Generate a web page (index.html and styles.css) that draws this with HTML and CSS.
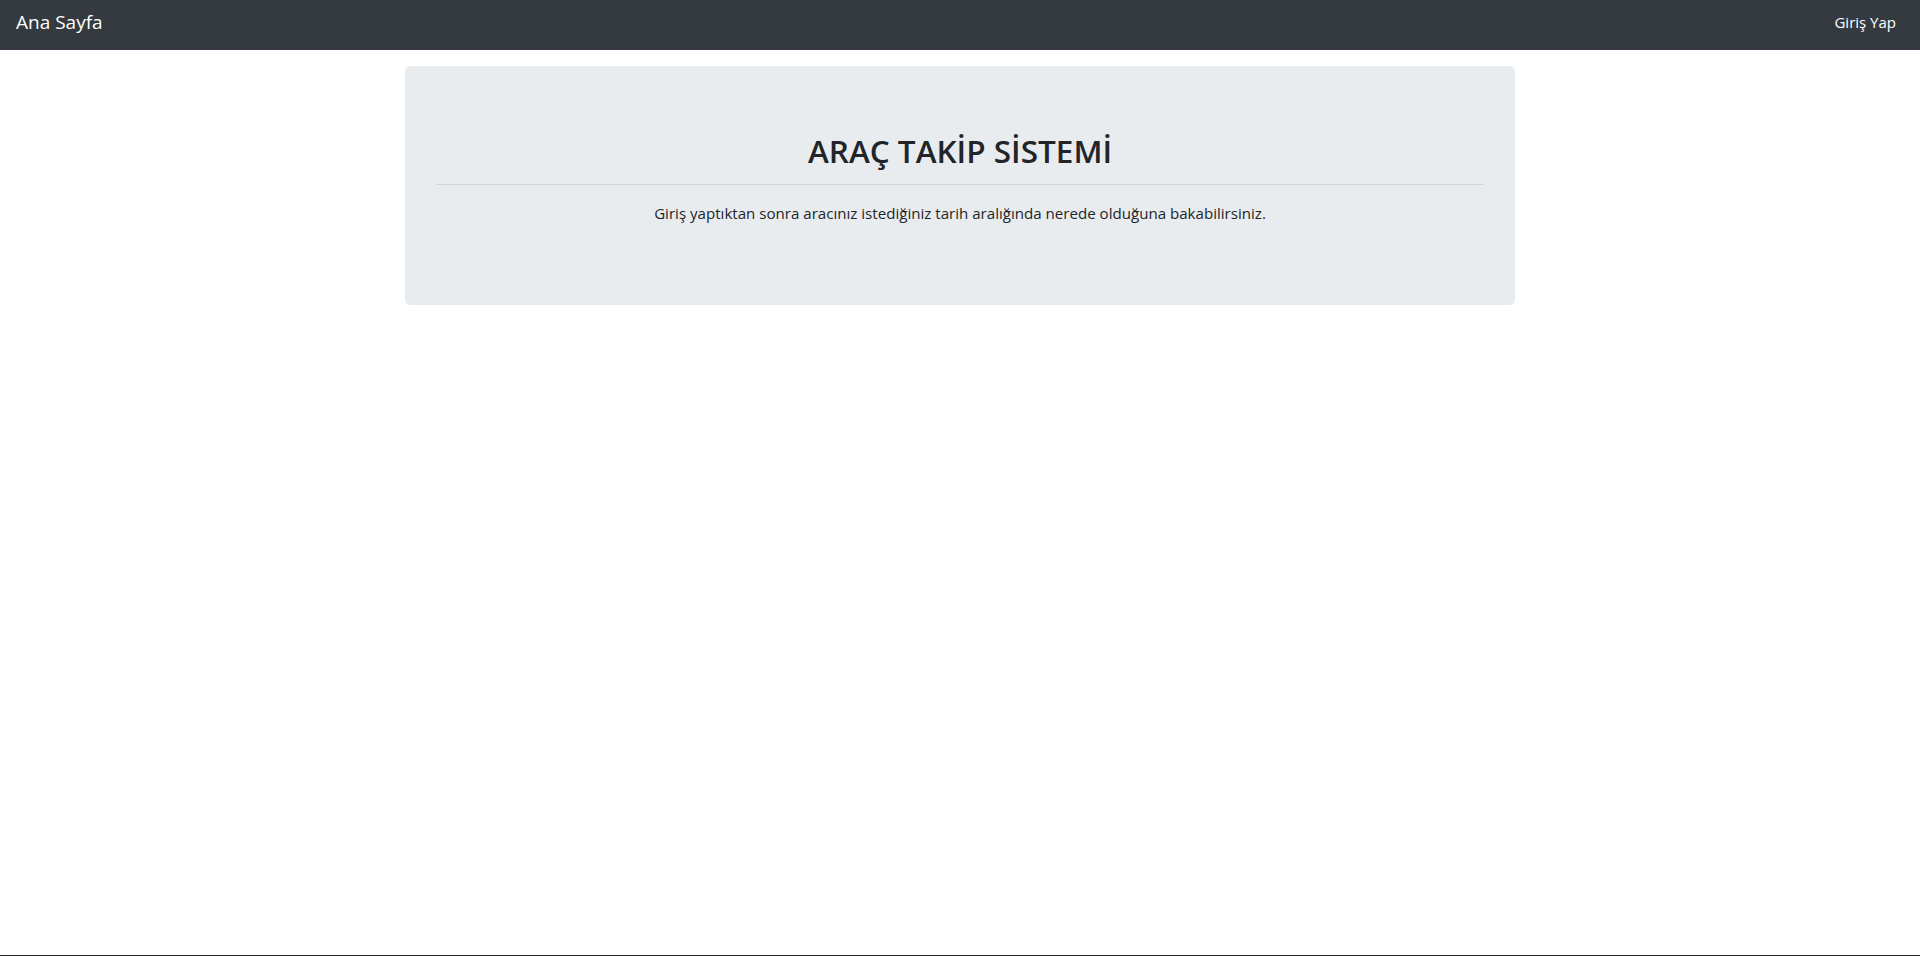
FILE: index.html
```html
<!DOCTYPE html>
<html lang="tr">
<head>
<meta charset="utf-8">
<title>Ana Sayfa</title>
<link rel="stylesheet" href="styles.css">
</head>
<body>
<nav class="navbar">
  <a class="brand" href="#">Ana Sayfa</a>
  <a class="nav-link" href="#">Giriş Yap</a>
</nav>
<main class="container">
  <section class="jumbotron">
    <h1 class="title">ARAÇ TAKİP SİSTEMİ</h1>
    <hr class="divider">
    <p class="lead">Giriş yaptıktan sonra aracınız istediğiniz tarih aralığında nerede olduğuna bakabilirsiniz.</p>
  </section>
</main>
<footer class="footer"></footer>
</body>
</html>
```
FILE: styles.css
```css
* { box-sizing: border-box; }
html, body { margin: 0; padding: 0; }
body {
  font-family: "Open Sans", "Noto Sans", sans-serif;
  font-size: 16px;
  line-height: 1.5;
  color: #212529;
  background: #fff;
  height: 956px;
  overflow: hidden;
}
.navbar {
  display: flex;
  align-items: center;
  justify-content: space-between;
  height: 50px;
  padding: 0 24px 6px 16px;
  background: #343a40;
}
.brand {
  color: #fff;
  text-decoration: none;
  font-size: 19px;
  line-height: 30px;
}
.nav-link {
  color: #fff;
  text-decoration: none;
  font-size: 15px;
  line-height: 24px;
}
.container {
  width: 1110px;
  margin: 16px auto 0;
}
.jumbotron {
  background: #e9ecef;
  border-radius: 4.8px;
  padding: 64px 32px;
  text-align: center;
  height: 239px;
}
.title {
  margin: 0;
  font-size: 31.5px;
  font-weight: 600;
  line-height: 42px;
}
.divider {
  margin: 12px 0 16px;
  border: 0;
  border-top: 1px solid rgba(0,0,0,0.1);
}
.lead {
  margin: 0;
  font-size: 15.1px;
  line-height: 24px;
}
.footer {
  position: fixed;
  left: 0;
  right: 0;
  bottom: 0;
  height: 1px;
  background: #222;
}
```
